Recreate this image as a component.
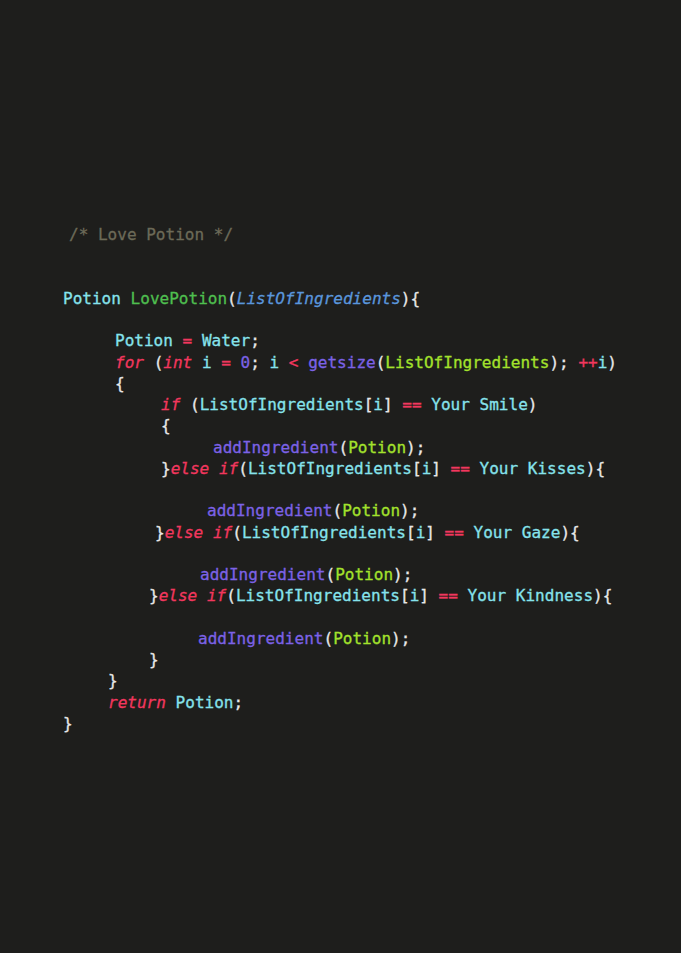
import { ReactElement, ReactNode } from "react";

// token colours
const cyan = "text-[#86e3ec]";
const green = "text-[#4fbf4f]";
const blue = "text-[#5a96dc] italic";
const red = "text-[#f2375e]";
const kw = "text-[#f2375e] italic";
const purple = "text-[#7c62e6]";
const lime = "text-[#a4e22c]";
const white = "text-[#e8e8e8]";

const T = ({ c, children }: { c: string; children: ReactNode }): ReactElement => (
  <span className={c}>{children}</span>
);

const Line = ({ x, children }: { x: string; children?: ReactNode }): ReactElement => (
  <div className={`h-[21.26px] whitespace-pre ${x}`}>{children}</div>
);

const Cond = ({ what }: { what: string }): ReactElement => (
  <>
    <T c={white}>{"}"}</T>
    <T c={kw}>else</T> <T c={kw}>if</T>
    <T c={white}>(</T>
    <T c={cyan}>ListOfIngredients</T>
    <T c={white}>[</T>
    <T c={cyan}>i</T>
    <T c={white}>]</T> <T c={red}>==</T> <T c={cyan}>{what}</T>
    <T c={white}>{"){"}</T>
  </>
);

const Add = (): ReactElement => (
  <>
    <T c={purple}>addIngredient</T>
    <T c={white}>(</T>
    <T c={lime}>Potion</T>
    <T c={white}>);</T>
  </>
);

export default function App(): ReactElement {
  return (
    <div
      className="min-h-[953px] w-full bg-[#1e1e1c] pt-[224px] text-[16.05px] leading-[21.26px] [-webkit-text-stroke:0.3px_currentColor]"
      style={{ fontFamily: '"DejaVu Sans Mono", "Liberation Mono", monospace' }}
    >
      <Line x="pl-[69px]">
        <T c="text-[#6c6a58]">/* Love Potion */</T>
      </Line>
      <Line x="" />
      <Line x="" />
      <Line x="pl-[63px]">
        <T c={cyan}>Potion</T> <T c={green}>LovePotion</T>
        <T c={white}>(</T>
        <T c={blue}>ListOfIngredients</T>
        <T c={white}>{"){"}</T>
      </Line>
      <Line x="" />
      <Line x="pl-[115px]">
        <T c={cyan}>Potion</T> <T c={red}>=</T> <T c={cyan}>Water</T>
        <T c={white}>;</T>
      </Line>
      <Line x="pl-[115px]">
        <T c={kw}>for</T> <T c={white}>(</T>
        <T c={kw}>int</T> <T c={cyan}>i</T> <T c={red}>=</T> <T c={purple}>0</T>
        <T c={white}>;</T> <T c={cyan}>i</T> <T c={red}>{"<"}</T> <T c={purple}>getsize</T>
        <T c={white}>(</T>
        <T c={lime}>ListOfIngredients</T>
        <T c={white}>);</T> <T c={red}>++</T>
        <T c={cyan}>i</T>
        <T c={white}>)</T>
      </Line>
      <Line x="pl-[115px]">
        <T c={white}>{"{"}</T>
      </Line>
      <Line x="pl-[161px]">
        <T c={kw}>if</T> <T c={white}>(</T>
        <T c={cyan}>ListOfIngredients</T>
        <T c={white}>[</T>
        <T c={cyan}>i</T>
        <T c={white}>]</T> <T c={red}>==</T> <T c={cyan}>Your Smile</T>
        <T c={white}>)</T>
      </Line>
      <Line x="pl-[161px]">
        <T c={white}>{"{"}</T>
      </Line>
      <Line x="pl-[213px]">
        <Add />
      </Line>
      <Line x="pl-[161px]">
        <Cond what="Your Kisses" />
      </Line>
      <Line x="" />
      <Line x="pl-[207px]">
        <Add />
      </Line>
      <Line x="pl-[155px]">
        <Cond what="Your Gaze" />
      </Line>
      <Line x="" />
      <Line x="pl-[200px]">
        <Add />
      </Line>
      <Line x="pl-[149px]">
        <Cond what="Your Kindness" />
      </Line>
      <Line x="" />
      <Line x="pl-[198px]">
        <Add />
      </Line>
      <Line x="pl-[149px]">
        <T c={white}>{"}"}</T>
      </Line>
      <Line x="pl-[108px]">
        <T c={white}>{"}"}</T>
      </Line>
      <Line x="pl-[108px]">
        <T c={kw}>return</T> <T c={cyan}>Potion</T>
        <T c={white}>;</T>
      </Line>
      <Line x="pl-[63px]">
        <T c={white}>{"}"}</T>
      </Line>
    </div>
  );
}
